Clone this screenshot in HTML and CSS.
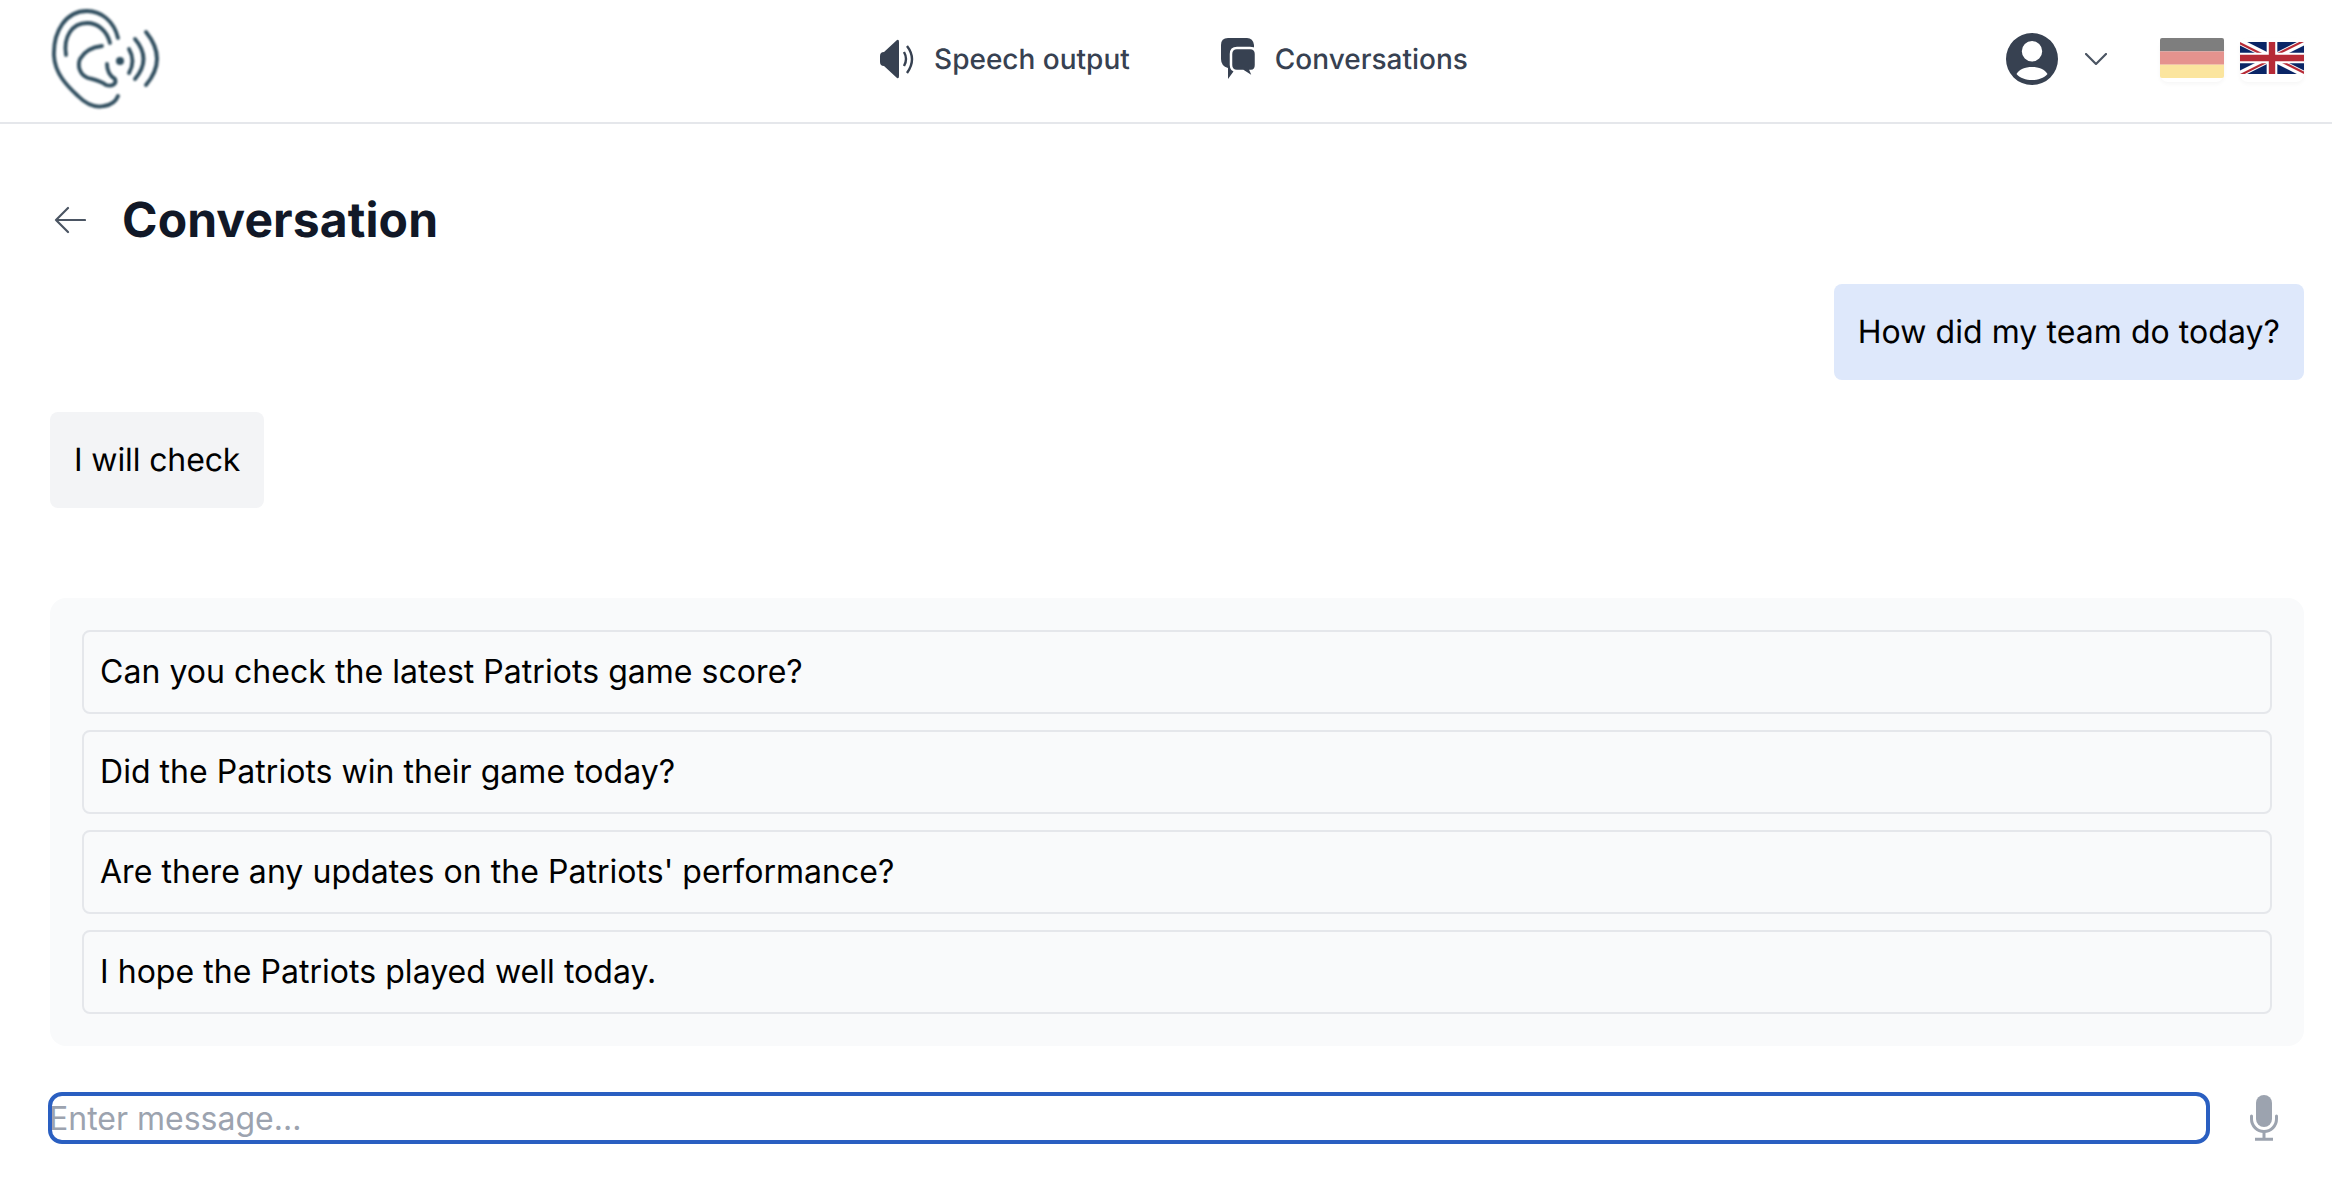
FILE: index.html
```html
<!DOCTYPE html>
<html lang="en">
<head>
  <meta charset="UTF-8">
  <meta name="viewport" content="width=device-width, initial-scale=1.0">
  <title>Conversation</title>
  <link rel="stylesheet" href="styles.css">
</head>
<body>
  <header class="topbar">
    <a href="#" class="logo">
      <svg class="logo-icon" width="112" height="106" viewBox="50 5 112 106" fill="none" stroke="#2f4d5e" stroke-width="3.8" stroke-linecap="round" stroke-linejoin="round">
        <path d="M118 37 C114 20 101 10 87 10 C66 10 53 30 54 55 C55 72 66 84 78 95 C86 103 95 107 104 105 C111 104 116 100 118 95"/>
        <path d="M66 54 C63 36 72 22 87 22 C98 22 107 30 110 42"/>
        <path d="M102 45 C92 46 84 51 80 58 C77 65 80 74 88 77 C96 79 101 80 106 84 C112 86 117 83 115 78 C110 75 107 70 107 63"/>
        <circle cx="120" cy="60" r="4" fill="#2f4d5e" stroke="none"/>
        <path d="M129 48 Q136 60 129 72"/>
        <path d="M135 38 Q152 58 135 78"/>
        <path d="M146 31 Q168 58 146 84"/>
      </svg>
    </a>

    <nav class="nav">
      <a href="#" class="nav-item">
        <svg width="35" height="40" viewBox="0 0 35 40" fill="#374151">
          <path d="M0 17 Q0 13 4 13 L17 1 Q19 0 19 3 V37 Q19 40 17 39 L4 27 Q0 27 0 23Z"/>
          <path d="M24 13 Q28 20 24 27" fill="none" stroke="#374151" stroke-width="2.4"/>
          <path d="M27 7 Q37 20 27 34" fill="none" stroke="#374151" stroke-width="2.4"/>
        </svg>
        Speech output
      </a>
      <a href="#" class="nav-item">
        <svg width="35" height="41" viewBox="0 0 35 41" fill="#374151">
          <path d="M7 0 H26 Q32 0 33 7 V20 Q32 30 24 30 H15 L7 41 L7 30 Q0 28 0 21 V7 Q0 0 7 0Z"/>
          <path d="M16 10 H29 Q35 10 35 16 V27 Q35 33 30 33 L33 40 L22 33 H16 Q10 33 10 27 V16 Q10 10 16 10Z" stroke="#fff" stroke-width="2.5"/>
        </svg>
        Conversations
      </a>
    </nav>

    <div class="top-right">
      <a href="#" class="user-menu">
        <svg width="52" height="52" viewBox="0 0 52 52">
          <path fill="#374151" fill-rule="evenodd" d="M26 0 A26 26 0 1 1 26 52 A26 26 0 1 1 26 0Z M26 8 A10.2 10.2 0 1 0 26 28.4 A10.2 10.2 0 1 0 26 8Z M10.5 41 C13 36.5 19 34 26 34 S39 36.5 41.5 41 C38 45 32 47 26 47 S14 45 10.5 41Z"/>
        </svg>
        <svg width="22" height="12" viewBox="0 0 22 12" fill="none" stroke="#4b5563" stroke-width="2.2" stroke-linecap="round" stroke-linejoin="round">
          <path d="M1 1 L11 11 L21 1"/>
        </svg>
      </a>
      <div class="flags">
        <a href="#" class="flag">
          <svg class="flag-de" width="64" height="40" viewBox="0 0 64 40">
            <rect width="64" height="13.4" fill="#000"/>
            <rect y="13.4" width="64" height="13.3" fill="#cc2a20"/>
            <rect y="26.7" width="64" height="13.3" fill="#f8cc3f"/>
          </svg>
        </a>
        <a href="#" class="flag flag-uk">
          <svg width="64" height="32" viewBox="0 0 60 30">
            <clipPath id="uk-diag"><path d="M30,15h30v15zv15H0zH0V0zV0h30z"/></clipPath>
            <rect width="60" height="30" fill="#0a2566"/>
            <path d="M0,0 L60,30 M60,0 L0,30" stroke="#fff" stroke-width="6"/>
            <path d="M0,0 L60,30 M60,0 L0,30" stroke="#b62a36" stroke-width="4" clip-path="url(#uk-diag)"/>
            <path d="M30,0 V30 M0,15 H60" stroke="#fff" stroke-width="10"/>
            <path d="M30,0 V30 M0,15 H60" stroke="#b62a36" stroke-width="6"/>
          </svg>
        </a>
      </div>
    </div>
  </header>

  <main class="content">
    <div class="title-row">
      <a href="#" class="back">
        <svg width="32" height="28" viewBox="0 0 32 28" fill="none" stroke="#4b5563" stroke-width="2.2" stroke-linecap="round" stroke-linejoin="round">
          <path d="M14 2 L2 14 L14 26 M2 14 H31"/>
        </svg>
      </a>
      <h1>Conversation</h1>
    </div>

    <div class="messages">
      <div class="bubble bubble-user">How did my team do today?</div>
      <div class="bubble bubble-bot">I will check</div>
    </div>

    <div class="suggestions">
      <button class="suggestion">Can you check the latest Patriots game score?</button>
      <button class="suggestion">Did the Patriots win their game today?</button>
      <button class="suggestion">Are there any updates on the Patriots' performance?</button>
      <button class="suggestion">I hope the Patriots played well today.</button>
    </div>

    <div class="composer">
      <input class="message-input" type="text" placeholder="Enter message...">
      <button class="mic">
        <svg width="28" height="46" viewBox="0 0 28 46" fill="none" stroke="#9ca3af">
          <rect x="6" y="0" width="16" height="32" rx="8" fill="#9ca3af" stroke="none"/>
          <path d="M1.5 21 V24 A12.5 12.5 0 0 0 26.5 24 V21" stroke-width="3" stroke-linecap="round"/>
          <path d="M14 36 V44 M5 44.2 H23" stroke-width="3"/>
        </svg>
      </button>
    </div>
  </main>
</body>
</html>
```

FILE: styles.css
```css
* {
  box-sizing: border-box;
}
body {
  margin: 0;
  background-color: #fff;
  color: #000;
  font-family: Inter, "Noto Sans", sans-serif;
  font-size: 32px;
  line-height: 48px;
  text-rendering: geometricPrecision;
}
a {
  color: inherit;
  text-decoration: none;
}
.topbar {
  display: grid;
  grid-template-columns: 1fr auto 1fr;
  align-items: center;
  height: 124px;
  padding: 0 28px 5px 50px;
  border-bottom: 2px solid #e5e7eb;
}
.logo {
  display: flex;
}
.logo-icon {
  filter: blur(0.8px);
}
.nav {
  display: flex;
  gap: 91px;
  padding-right: 6px;
}
.nav-item {
  display: flex;
  align-items: center;
  gap: 19px;
  color: #374151;
  font-size: 28px;
  line-height: 44px;
  font-weight: 500;
}
.top-right {
  display: flex;
  align-items: center;
  justify-content: flex-end;
}
.user-menu {
  display: flex;
  align-items: center;
  gap: 27px;
  margin-right: 53px;
}
.flags {
  display: flex;
  gap: 16px;
  margin-top: 3px;
}
.flag {
  display: block;
  width: 64px;
  height: 44px;
  border-radius: 8px;
  background-color: #fff;
  box-shadow: 0 2px 4px rgba(0, 0, 0, 0.04);
}
.flag svg {
  display: block;
}
.flag-de {
  opacity: 0.5;
  border-radius: 2px;
}
.flag-uk {
  padding-top: 4px;
}
.content {
  padding: 0 28px 0 50px;
}
.title-row {
  display: flex;
  align-items: center;
  gap: 36px;
  height: 160px;
  padding: 32px 0 0 4px;
}
.back {
  display: flex;
}
h1 {
  margin: 0;
  color: #111827;
  font-size: 48px;
  line-height: 64px;
  font-weight: 700;
  letter-spacing: 0.12px;
}
.messages {
  display: flex;
  flex-direction: column;
  gap: 32px;
}
.bubble {
  padding: 24px;
  border-radius: 8px;
}
.bubble-user {
  align-self: flex-end;
  background-color: #dee8fb;
  letter-spacing: 0.06px;
}
.bubble-bot {
  align-self: flex-start;
  background-color: #f3f4f6;
  letter-spacing: -0.12px;
}
.suggestions {
  display: flex;
  flex-direction: column;
  gap: 16px;
  margin-top: 90px;
  padding: 32px;
  border-radius: 16px;
  background-color: #f9fafb;
}
.suggestion {
  height: 84px;
  padding: 16px;
  border: 2px solid #e5e7eb;
  border-radius: 8px;
  background-color: #f9fafb;
  color: #000;
  font: inherit;
  letter-spacing: 0.04px;
  text-align: left;
}
.composer {
  display: flex;
  align-items: center;
  margin-top: 46px;
}
.message-input {
  flex: 1;
  height: 52px;
  margin-left: -2px;
  padding: 0;
  border: 4px solid #2a5fc1;
  border-radius: 14px;
  outline: none;
  background: none;
  color: #000;
  font: inherit;
  text-indent: -3px;
}
.message-input::placeholder {
  color: #9ca3af;
  opacity: 1;
}
.mic {
  display: flex;
  padding: 0 26px 0 40px;
  border: none;
  background: none;
}
```
